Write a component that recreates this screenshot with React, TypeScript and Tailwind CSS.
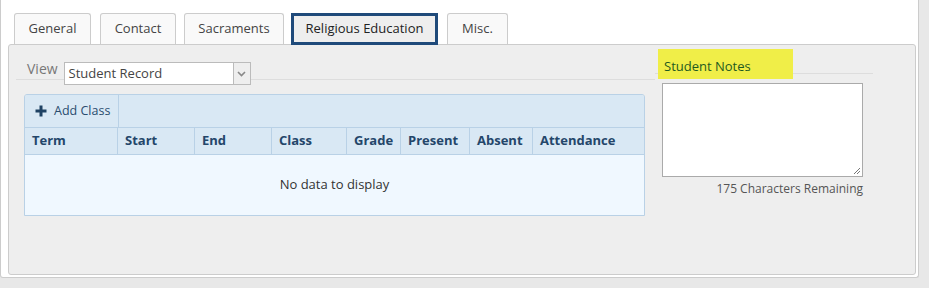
import React from 'react';

const tabs = [
  { label: 'General', cls: 'ml-[13px] w-[77px]' },
  { label: 'Contact', cls: 'ml-[9px] w-[76px]' },
  { label: 'Sacraments', cls: 'ml-[8px] w-[100px]' },
  { label: 'Religious Education', cls: 'ml-[7px] w-[147px]' },
  { label: 'Misc.', cls: 'ml-[9px] w-[61px]' },
];

const columns = [
  { label: 'Term', w: 'w-[93px]' },
  { label: 'Start', w: 'w-[77px]' },
  { label: 'End', w: 'w-[77px]' },
  { label: 'Class', w: 'w-[75px]' },
  { label: 'Grade', w: 'w-[54px]' },
  { label: 'Present', w: 'w-[69px]' },
  { label: 'Absent', w: 'w-[63px]' },
  { label: 'Attendance', w: 'flex-1' },
];

export default function App() {
  return (
    <div className="h-[288px] w-[929px] overflow-hidden bg-[#e8e8e8] font-['Open_Sans',sans-serif] text-[13px] text-[#333]">
      <div className="h-[278px] w-[919px] rounded-b-[3px] border-b border-l border-r border-[#cccccc] bg-white">
        {/* tab strip */}
        <div className="flex h-[44px] items-end">
          {tabs.map((t, i) =>
            i === 3 ? (
              <div
                key={t.label}
                className={`${t.cls} relative z-10 mb-[-1px] flex h-[32px] items-center justify-center border-[3px] border-[#1f4a7a] bg-[#eeeeee] text-[#222]`}
              >
                {t.label}
              </div>
            ) : (
              <div
                key={t.label}
                className={`${t.cls} flex h-[31px] items-center justify-center rounded-t-[3px] border border-b-0 border-[#cccccc] bg-[#f9f9f9] text-[#444]`}
              >
                {t.label}
              </div>
            )
          )}
        </div>

        {/* panel */}
        <div className="ml-[7px] flex h-[231px] w-[908px] rounded-[3px] border border-[#cccccc] bg-[#eeeeee]">
          <div className="w-[646px] pl-[7px] pt-[17px]">
            <div className="flex h-[18px] items-end border-b border-[#dddddd]">
              <span className="mb-[-1px] ml-[11px] text-[14px] leading-[22px] text-[#777]">View</span>
              <div className="mb-[-6px] ml-[6px] flex h-[23px] w-[187px] border border-[#bbbbbb] bg-white">
                <span className="flex-1 pl-[4px] text-[13px] leading-[21px] text-[#444]">Student Record</span>
                <span className="flex w-[17px] items-center justify-center border-l border-[#bbbbbb] bg-[#eeeeee]">
                  <svg width="9" height="6" viewBox="0 0 9 6">
                    <path d="M1 1 L4.5 4.5 L8 1" fill="none" stroke="#888" strokeWidth="1.6" />
                  </svg>
                </span>
              </div>
            </div>

            <div className="ml-[8px] mt-[14px] w-[621px] overflow-hidden rounded-t-[3px] border border-[#b9d1e6]">
              <div className="flex h-[32px] bg-[#d9e8f4]">
                <div className="flex items-center gap-[7px] border-r border-[#b9d1e6] pl-[10px] pr-[8px] text-[12.5px] text-[#2a4c6e]">
                  <svg width="12" height="12" viewBox="0 0 12 12">
                    <path d="M6 0.5 V11.5 M0.5 6 H11.5" stroke="#1f4263" strokeWidth="3" />
                  </svg>
                  Add Class
                </div>
              </div>
              <div className="flex h-[27px] border-t border-[#b9d1e6] bg-[#d9e8f4]">
                {columns.map((c, i) => (
                  <div
                    key={c.label}
                    className={`${c.w} ${i < columns.length - 1 ? 'border-r border-[#b9d1e6]' : ''} flex items-center pl-[7px] text-[13px] font-bold text-[#24466a]`}
                  >
                    {c.label}
                  </div>
                ))}
              </div>
              <div className="flex h-[61px] items-center justify-center border-t border-[#b9d1e6] bg-[#f0f8ff] text-[13px] text-[#333]">
                No data to display
              </div>
            </div>
          </div>

          <div className="w-[218px] pt-[5px]">
            <div className="flex h-[24px] items-end border-b border-[#dddddd]">
              <div className="mb-[-6px] ml-[3px] flex h-[30px] w-[135px] items-end bg-[#f0ee48] pb-[3px] pl-[6px] text-[13px] text-[#1f5a1f]">
                Student Notes
              </div>
            </div>
            <div className="relative ml-[7px] mt-[9px] h-[94px] w-[201px] border border-[#aaaaaa] bg-white">
              <svg className="absolute bottom-[1px] right-[1px]" width="8" height="8" viewBox="0 0 8 8">
                <path d="M1 7 L7 1 M4 7 L7 4" stroke="#777" strokeWidth="1" />
              </svg>
            </div>
            <div className="w-[208px] pt-[3px] text-right text-[12px] text-[#555]">175 Characters Remaining</div>
          </div>
        </div>
      </div>
    </div>
  );
}
